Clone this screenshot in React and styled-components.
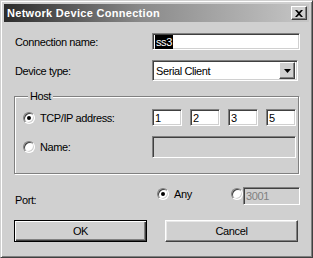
import React from 'react'
import styled, { createGlobalStyle, css } from 'styled-components'

const GlobalStyle = createGlobalStyle`
  html, body {
    margin: 0;
    padding: 0;
    background: #d0d0d0;
  }
  body {
    font-family: "Liberation Sans", Arial, sans-serif;
    font-size: 11px;
    letter-spacing: -0.4px;
    color: #000;
  }
`;

const sunken = css`
  border: 1px solid;
  border-color: #808080 #fff #fff #808080;
  box-shadow: inset 1px 1px 0 #404040, inset -1px -1px 0 #d0d0d0;
`;

const raised = css`
  border: 1px solid;
  border-color: #fff #404040 #404040 #fff;
  box-shadow: inset -1px -1px 0 #808080;
`;

const Window = styled.div`
  box-sizing: border-box;
  width: 313px;
  height: 258px;
  padding: 4px 4px;
  background: #d0d0d0;
  border: 1px solid;
  border-color: #d0d0d0 #404040 #404040 #d0d0d0;
  box-shadow: inset 1px 1px 0 #fff, inset -1px -1px 0 #808080;
  display: flex;
  flex-direction: column;
`;

const TitleBar = styled.div`
  height: 18px;
  margin: -1px -1px 0 -1px;
  padding: 0 3px 0 3px;
  display: flex;
  align-items: center;
  justify-content: space-between;
  background: linear-gradient(to right, #2c2c2c 0%, #8a8a8a 45%, #c6c6c6 100%);
`;

const Title = styled.span`
  color: #fff;
  font-weight: bold;
  font-size: 11px;
  letter-spacing: 0.3px;
`;

const CloseButton = styled.div`
  box-sizing: border-box;
  width: 16px;
  height: 14px;
  margin-right: -1px;
  background: #d0d0d0;
  ${raised};
  display: flex;
  align-items: center;
  justify-content: center;
`;

const Content = styled.div`
  padding: 11px 10px 0 9px;
  display: flex;
  flex-direction: column;
`;

const Row = styled.div`
  display: flex;
  align-items: ${p => p.$align || 'center'};
  height: ${p => p.$h || 17}px;
  margin-bottom: ${p => p.$mb || 0}px;
`;

const Label = styled.div`
  width: ${p => p.$w || 138}px;
  flex: none;
  padding-left: ${p => p.$pl ?? 1}px;
  padding-top: ${p => p.$pt || 0}px;
  box-sizing: border-box;
`;

const TextBox = styled.div`
  box-sizing: border-box;
  width: ${p => p.$w}px;
  height: ${p => p.$h || 17}px;
  flex: none;
  ${sunken};
  background: ${p => (p.$disabled ? '#d0d0d0' : '#fff')};
  color: ${p => (p.$disabled ? '#808080' : '#000')};
  padding: 0 2px;
  display: flex;
  align-items: center;
  white-space: nowrap;
  overflow: hidden;
`;

const Selected = styled.span`
  background: #000;
  color: #fff;
  padding: 1px 1px;
`;

const Select = styled.div`
  box-sizing: border-box;
  width: 148px;
  height: 21px;
  ${sunken};
  background: #fff;
  display: flex;
  align-items: center;
  padding: 2px 2px 2px 3px;
`;

const SelectValue = styled.span`
  flex: 1;
`;

const DropButton = styled.div`
  box-sizing: border-box;
  width: 16px;
  height: 17px;
  background: #d0d0d0;
  ${raised};
  display: flex;
  align-items: center;
  justify-content: center;
`;

const Group = styled.fieldset`
  margin: 9px 0 0 0;
  min-width: 0;
  width: 285px;
  box-sizing: border-box;
  height: 84px;
  padding: 7px 0 0 8px;
  border: 1px solid #808080;
  box-shadow: 1px 1px 0 #fff, inset 1px 1px 0 #fff;
  display: flex;
  flex-direction: column;
`;

const Legend = styled.legend`
  padding: 0 2px;
  margin-left: 5px;
  background: #d0d0d0;
  line-height: 12px;
`;

const RadioLabel = styled.label`
  display: flex;
  align-items: center;
  gap: 5px;
  width: ${p => p.$w || 'auto'};
  flex: none;
`;

const RadioDot = styled.span`
  box-sizing: border-box;
  width: 12px;
  height: 12px;
  flex: none;
  border-radius: 50%;
  border: 1px solid;
  border-color: #808080 #fff #fff #808080;
  box-shadow: inset 1px 1px 0 #404040, inset -1px -1px 0 #d0d0d0;
  background: ${p => (p.$disabled ? '#d0d0d0' : '#fff')};
  display: flex;
  align-items: center;
  justify-content: center;
  &::after {
    content: '';
    width: 4px;
    height: 4px;
    border-radius: 50%;
    background: ${p => (p.$checked ? '#000' : 'transparent')};
  }
`;

const IpBoxes = styled.div`
  display: flex;
  gap: 8px;
`;

const PortChoices = styled.div`
  display: flex;
  align-items: center;
  height: 14px;
`;

const Buttons = styled.div`
  display: flex;
  justify-content: space-between;
  margin-top: 15px;
  padding-right: 0;
`;

const Button = styled.button`
  box-sizing: border-box;
  width: 133px;
  height: 22px;
  font-family: inherit;
  font-size: 11px;
  letter-spacing: inherit;
  color: #000;
  background: #d0d0d0;
  padding: 0;
  border: 1px solid;
  border-color: #fff #404040 #404040 #fff;
  box-shadow: inset -1px -1px 0 #808080, inset 1px 1px 0 #e8e8e8;
  ${p =>
    p.$default &&
    css`
      border: 1px solid #000;
      box-shadow: inset 1px 1px 0 #fff, inset -1px -1px 0 #404040, inset -2px -2px 0 #808080;
    `}
`;

function Radio({ checked, children, w, disabled }) {
  return (
    <RadioLabel $w={w}>
      <RadioDot $checked={checked} $disabled={disabled} />
      {children}
    </RadioLabel>
  );
}

export default function App() {
  return (
    <>
      <GlobalStyle />
      <Window>
        <TitleBar>
          <Title>Network Device Connection</Title>
          <CloseButton>
            <svg width="8" height="7" viewBox="0 0 8 7">
              <path d="M0 0h2l2 2 2-2h2L5 3.5 8 7H6L4 5 2 7H0l3-3.5z" fill="#000" />
            </svg>
          </CloseButton>
        </TitleBar>
        <Content>
          <Row $mb={10}>
            <Label>Connection name:</Label>
            <TextBox $w={148}><Selected>ss3</Selected></TextBox>
          </Row>
          <Row $h={21}>
            <Label>Device type:</Label>
            <Select>
              <SelectValue>Serial Client</SelectValue>
              <DropButton>
                <svg width="7" height="4" viewBox="0 0 7 4">
                  <path d="M0 0h7L3.5 4z" fill="#000" />
                </svg>
              </DropButton>
            </Select>
          </Row>
          <Group>
            <Legend>Host</Legend>
            <Row $mb={10}>
              <Label $w={129} $pl={0}>
                <Radio checked>TCP/IP address:</Radio>
              </Label>
              <IpBoxes>
                <TextBox $w={30}>1</TextBox>
                <TextBox $w={30}>2</TextBox>
                <TextBox $w={30}>3</TextBox>
                <TextBox $w={30}>5</TextBox>
              </IpBoxes>
            </Row>
            <Row $h={22}>
              <Label $w={129} $pl={0}>
                <Radio>Name:</Radio>
              </Label>
              <TextBox $w={144} $h={22} $disabled />
            </Row>
          </Group>
          <Row $h={18} $align="flex-start" style={{ marginTop: 13 }}>
            <Label $w={143} $pt={7}>Port:</Label>
            <PortChoices>
              <Radio checked w="74px">Any</Radio>
              <RadioDot />
            </PortChoices>
            <TextBox $w={57} $h={18} $disabled>3001</TextBox>
          </Row>
          <Buttons>
            <Button $default>OK</Button>
            <Button>Cancel</Button>
          </Buttons>
        </Content>
      </Window>
    </>
  );
}
